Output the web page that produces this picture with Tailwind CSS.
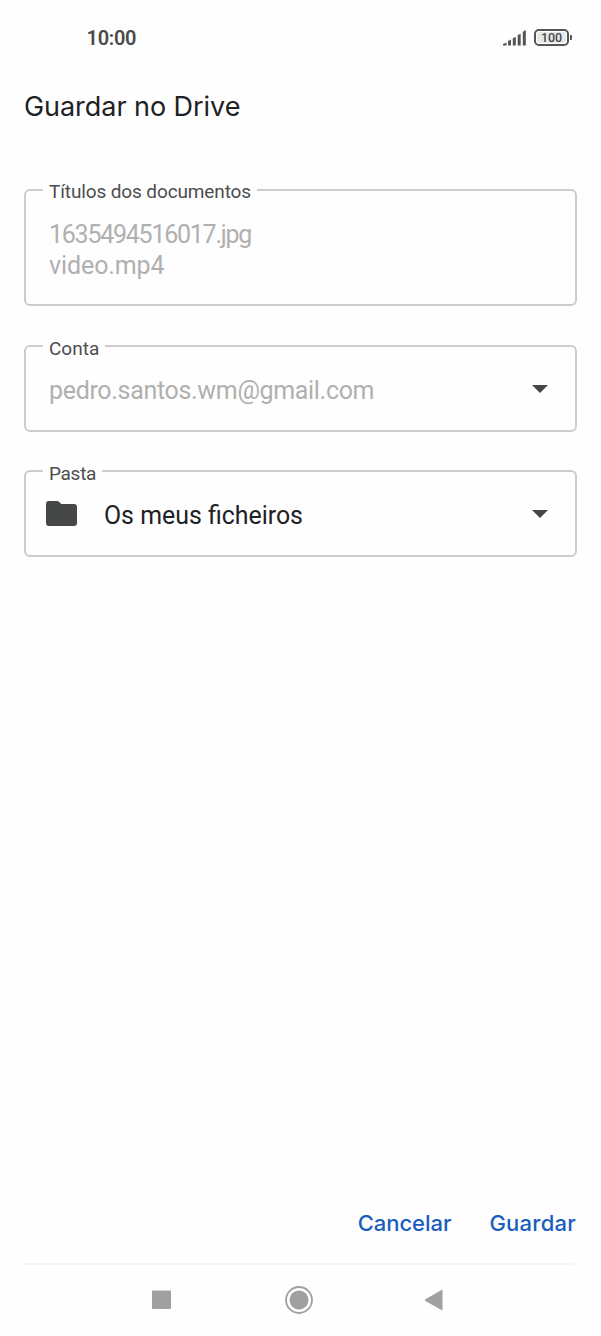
<!DOCTYPE html>
<html lang="pt">
<head>
<meta charset="utf-8">
<meta name="viewport" content="width=device-width, initial-scale=1">
<title>Guardar no Drive</title>
<script src="https://cdn.jsdelivr.net/npm/@tailwindcss/browser@4"></script>
</head>
<body class="bg-[#fefefe]">
<div class="flex h-[1336px] w-[601px] flex-col overflow-hidden bg-[#fefefe] font-['Roboto',sans-serif] text-[#202124]">
  <header class="flex h-[76px] shrink-0 items-center justify-between pl-[86.5px] pr-[28px]">
    <span class="text-[20px] font-semibold leading-6 tracking-[-0.3px] text-[#4a4a4a]">10:00</span>
    <div class="flex items-center gap-[7px]">
      <svg class="h-[18px] w-[24px]" viewBox="0 0 24 18" fill="#555"><path d="M0 16.500v-1.500L3.500 13.500v3zM5 16.500v-4.500L8 10.500v6zM9.800 16.500V9.200l3-1.400v8.700zM14.700 16.500V6l3-1.300v11.800zM19.800 16.500V2.800l3-1.800v15.500z"/></svg>
      <svg class="h-[18px] w-[39px]" viewBox="0 0 39 18"><rect x="1" y="1" width="33" height="15" rx="4" fill="#e8e8e8" stroke="#555" stroke-width="2"/><rect x="2.500" y="2.500" width="30" height="12" rx="2.500" fill="none" stroke="#fff"/><path d="M36 6h1q1 0 1 1v3q0 1-1 1h-1z" fill="#555"/><text x="17.500" y="13" text-anchor="middle" font-family="Roboto" font-size="12.500" font-weight="500" fill="#484848" textLength="21">100</text></svg>
    </div>
  </header>
  <h1 class="mt-[13px] h-9 shrink-0 whitespace-nowrap pl-[24px] font-['Inter',sans-serif] text-[27px] font-normal leading-9 tracking-[-0.05px]">Guardar no Drive</h1>
  <main class="flex flex-1 flex-col px-[24px] pt-[64px]">
    <section class="relative h-[117px] rounded-[6px] border-2 border-[#cccccc] pl-[23px] pt-[28px]">
      <span class="absolute -top-[11px] left-[17px] whitespace-nowrap bg-[#fefefe] px-[6px] text-[19px] leading-6 tracking-[-0.12px] text-[#4c4d4f]">Títulos dos documentos</span>
      <p class="whitespace-nowrap text-[25px] leading-[31px] tracking-[-1.25px] text-[#b0b0b0]">1635494516017.jpg</p>
      <p class="whitespace-nowrap text-[25px] leading-[31px] tracking-[-0.1px] text-[#b0b0b0]">video.mp4</p>
    </section>
    <section class="relative mt-[39px] flex h-[87px] items-center justify-between rounded-[6px] border-2 border-[#cccccc] pl-[23px] pr-[27px]">
      <span class="absolute -top-[10px] left-[17px] whitespace-nowrap bg-[#fefefe] px-[6px] text-[19px] leading-6 text-[#4c4d4f]">Conta</span>
      <p class="mt-[4px] whitespace-nowrap text-[25px] tracking-[-0.32px] text-[#b0b0b0]">pedro.santos.wm@gmail.com</p>
      <svg class="h-[8px] w-[16px]" viewBox="0 0 16 8"><path d="M0 0h16L8 8z" fill="#444746"/></svg>
    </section>
    <section class="relative mt-[38px] flex h-[87px] items-center rounded-[6px] border-2 border-[#cccccc] pl-[20px] pr-[27px]">
      <span class="absolute -top-[10px] left-[17px] whitespace-nowrap bg-[#fefefe] px-[6px] text-[19px] leading-6 tracking-[-0.3px] text-[#4c4d4f]">Pasta</span>
      <svg class="h-[25px] w-[31px]" viewBox="0 0 31 25"><path d="M3 0h8q1.200 0 2 .8L15.300 3H28q3 0 3 3v16q0 3-3 3H3q-3 0-3-3V3q0-3 3-3z" fill="#444746"/></svg>
      <p class="ml-[27px] mt-[4px] whitespace-nowrap text-[24.9px]">Os meus ficheiros</p>
      <svg class="ml-auto h-[8px] w-[16px]" viewBox="0 0 16 8"><path d="M0 0h16L8 8z" fill="#444746"/></svg>
    </section>
  </main>
  <div class="flex h-[80px] shrink-0 items-center justify-end gap-[38px] pr-[25px] font-['Inter',sans-serif] text-[22px] font-medium text-[#1a5dbe]">
    <button class="whitespace-nowrap tracking-[-0.05px]">Cancelar</button>
    <button class="whitespace-nowrap tracking-[0.25px]">Guardar</button>
  </div>
  <nav class="ml-[24px] mr-[28px] h-[73px] shrink-0 border-t-2 border-[#f4f4f4]">
    <svg class="h-[71px] w-[549px]" viewBox="24 1265 549 71" fill="#a0a0a0"><rect x="152" y="1290.500" width="19" height="18.500" rx="1"/><circle cx="299" cy="1300" r="9.500"/><circle cx="299" cy="1300" r="13" fill="none" stroke="#a0a0a0" stroke-width="1.800"/><path d="M425.500 1299.300 441.500 1290q1-.5 1 .5v19q0 1-1 .5L425.500 1301q-1.500-1 0-1.700z"/></svg>
  </nav>
</div>
</body>
</html>
